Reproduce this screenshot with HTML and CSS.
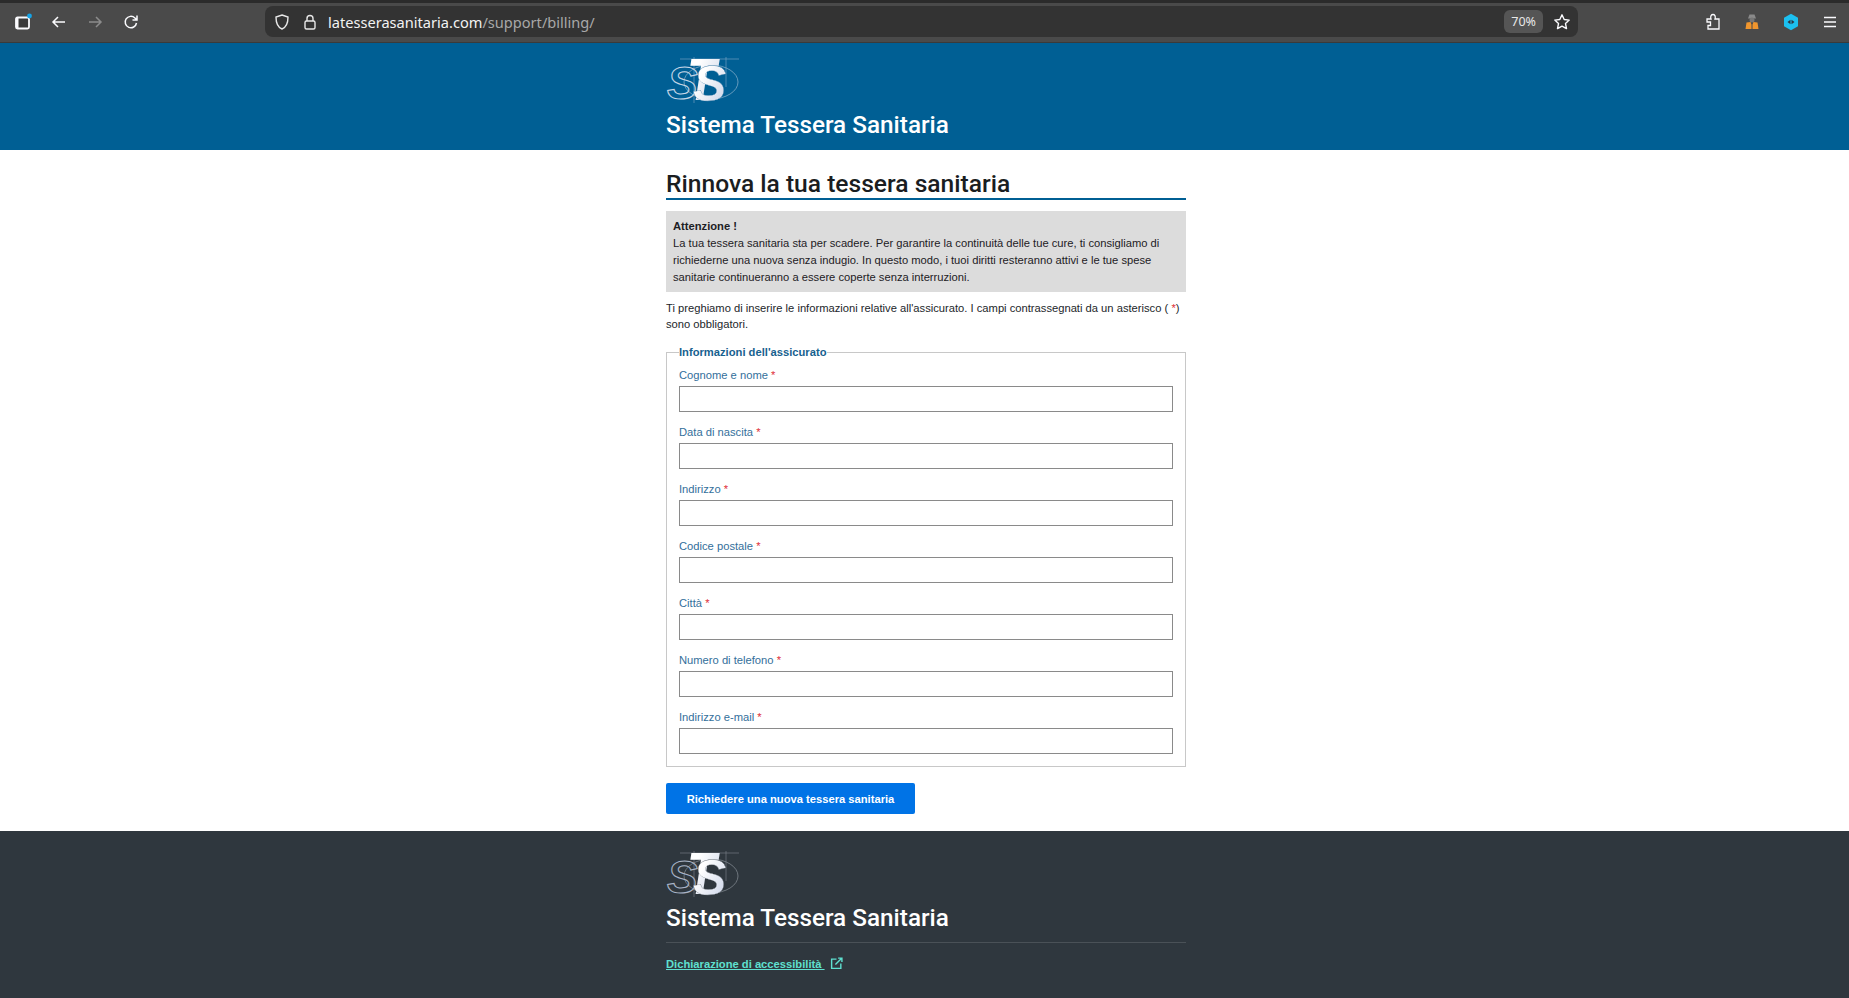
FILE: index.html
```html
<!DOCTYPE html>
<html lang="it">
<head>
    <meta charset="UTF-8">
    <title>Sistema Tessera Sanitaria</title>
    <link rel="stylesheet" href="styles.css">
</head>
<body>
    <div class="toolbar">
        <div class="nav_icons">
            <svg width="18" height="18" viewBox="0 0 18 18"><rect x="2" y="4.500" width="13" height="11" rx="1.500" fill="#3a3a3a" stroke="#fbfbfe" stroke-width="1.800"/><rect x="2" y="4.500" width="2.500" height="11" fill="#fbfbfe"/><circle cx="15.500" cy="3" r="2.400" fill="#14a4e8"/></svg>
            <svg width="18" height="18" viewBox="0 0 18 18"><path d="M15 9H3M8 4L3 9l5 5" fill="none" stroke="#fbfbfe" stroke-width="1.500"/></svg>
            <svg width="18" height="18" viewBox="0 0 18 18"><path d="M3 9h12M10 4l5 5-5 5" fill="none" stroke="#8c8c8c" stroke-width="1.500"/></svg>
            <svg width="18" height="18" viewBox="0 0 18 18"><path d="M14.500 10a5.700 5.700 0 1 1-1.600-5L15 7M15 2.500V7h-4.500" fill="none" stroke="#fbfbfe" stroke-width="1.500"/></svg>
        </div>
        <div class="urlbar">
            <svg width="18" height="18" viewBox="0 0 18 18"><path d="M9 2l6 2c0 6-1 10-6 12C4 14 3 10 3 4z" fill="none" stroke="#e8e8e8" stroke-width="1.400"/></svg>
            <svg class="lock" width="18" height="18" viewBox="0 0 18 18"><rect x="4" y="8" width="10" height="8" rx="1.500" fill="none" stroke="#e8e8e8" stroke-width="1.400"/><path d="M6 8V5.500a3 3 0 0 1 6 0V8" fill="none" stroke="#e8e8e8" stroke-width="1.400"/></svg>
            <span class="url">latesserasanitaria.com<span class="url_path">/support/billing/</span></span>
            <span class="zoom_pill">70%</span>
            <svg width="18" height="18" viewBox="0 0 18 18"><path d="M9 1.800l2.200 4.700 5 .6-3.700 3.500 1 5L9 13.100l-4.500 2.500 1-5L1.800 7.100l5-.6z" fill="none" stroke="#fbfbfe" stroke-width="1.400" stroke-linejoin="round"/></svg>
        </div>
        <div class="ext_icons">
            <svg width="18" height="18" viewBox="0 0 18 18"><path d="M3 6h4C6 3 7.500 1.500 9 1.500S12 3 11 6h4v10H4v-3.500h2.500V9H3z" fill="none" stroke="#fbfbfe" stroke-width="1.300"/></svg>
            <svg width="18" height="18" viewBox="0 0 18 18"><path d="M5 5.500l1.500-4h5l1.500 4z" fill="#8a8a8a"/><circle cx="9" cy="7" r="2.500" fill="#777"/><path d="M2.500 16l1-6.500 4-.5 1 2.500V16zM9.500 16v-4.500l1-2.500 4 .5 1 6.500z" fill="#f0962e"/></svg>
            <svg width="18" height="18" viewBox="0 0 18 18"><path d="M9 .800l7 4v8.400l-7 4-7-4V4.800z" fill="#1cc0f0"/><path d="M5.500 9l3-2.200v4.400zM12.500 9l-3-2.200v4.400z" fill="#2c3440"/></svg>
            <svg width="18" height="18" viewBox="0 0 18 18"><path d="M3 4.500h12M3 9h12M3 13.500h12" stroke="#fbfbfe" stroke-width="1.500"/></svg>
        </div>
    </div>

    <header class="site_head">
        <div class="wrap">
            <svg class="logo" width="74" height="50" viewBox="0 0 74 50">
                <defs>
                    <linearGradient id="shade" x1="0" y1="0" x2="1" y2="1">
                        <stop offset="0.300" stop-color="#ffffff"/>
                        <stop offset="1" stop-color="#c3cde4"/>
                    </linearGradient>
                </defs>
                <ellipse cx="45" cy="27" rx="27" ry="17" fill="none" stroke="#7fa9c6" stroke-width="0.800"/>
                <path d="M14 4h59M28 2v46M60 2v30" stroke="#7fa9c6" stroke-width="0.600" fill="none"/>
                <text class="logo_s1" x="1" y="44">S</text>
                <text class="logo_t" transform="translate(21 45) scale(.8 1)">T</text>
                <text class="logo_s2" x="27" y="46">S</text>
            </svg>
            <div class="brand">Sistema Tessera Sanitaria</div>
        </div>
    </header>

    <main class="wrap">
        <h1>Rinnova la tua tessera sanitaria</h1>
        <div class="alert">
            <b>Attenzione !</b><br>
            La tua tessera sanitaria sta per scadere. Per garantire la continuità delle tue cure, ti consigliamo di richiederne una nuova senza indugio. In questo modo, i tuoi diritti resteranno attivi e le tue spese sanitarie continueranno a essere coperte senza interruzioni.
        </div>
        <p class="intro">Ti preghiamo di inserire le informazioni relative all'assicurato. I campi contrassegnati da un asterisco ( <span class="req">*</span>) sono obbligatori.</p>
        <form>
            <fieldset>
                <legend>Informazioni dell'assicurato</legend>
                <div class="field"><label>Cognome e nome <span class="req">*</span></label><input type="text"></div>
                <div class="field"><label>Data di nascita <span class="req">*</span></label><input type="text"></div>
                <div class="field"><label>Indirizzo <span class="req">*</span></label><input type="text"></div>
                <div class="field"><label>Codice postale <span class="req">*</span></label><input type="text"></div>
                <div class="field"><label>Città <span class="req">*</span></label><input type="text"></div>
                <div class="field"><label>Numero di telefono <span class="req">*</span></label><input type="text"></div>
                <div class="field"><label>Indirizzo e-mail <span class="req">*</span></label><input type="text"></div>
            </fieldset>
            <button class="but_send" type="button">Richiedere una nuova tessera sanitaria</button>
        </form>
    </main>

    <footer class="site_foot">
        <div class="wrap">
            <svg class="logo" width="74" height="50" viewBox="0 0 74 50">
                <ellipse cx="45" cy="27" rx="27" ry="17" fill="none" stroke="#7d858d" stroke-width="0.800"/>
                <path d="M14 4h59M28 2v46M60 2v30" stroke="#7d858d" stroke-width="0.600" fill="none"/>
                <text class="logo_s1" x="1" y="44">S</text>
                <text class="logo_t" transform="translate(21 45) scale(.8 1)">T</text>
                <text class="logo_s2" x="27" y="46">S</text>
            </svg>
            <div class="brand">Sistema Tessera Sanitaria</div>
            <div class="foot_links">
                <a href="#">Dichiarazione di accessibilità&nbsp;</a>
                <svg width="13" height="13" viewBox="0 0 12 12"><path d="M6 2H1.500v8.500H10V6M5 7l6-6M7.500 1H11v3.500" fill="none" stroke="#5fe0d0" stroke-width="1.300"/></svg>
            </div>
        </div>
    </footer>
</body>
</html>
```

FILE: styles.css
```css
*{
    box-sizing: border-box;
}
body{
    margin: 0;
    font-family: "Liberation Sans", Arial, sans-serif;
    font-size: 11.2px;
    color: #1c2024;
    background-color: #fff;
}
.wrap{
    width: 520px;
    margin-left: 666px;
}
.toolbar{
    height: 43px;
    display: flex;
    align-items: center;
    background-color: #4a4a4a;
    border-top: 3px solid #2b2b2b;
    border-bottom: 1px solid #3a3a3a;
    padding-bottom: 2px;
}
.nav_icons{
    display: flex;
    gap: 18px;
    margin-left: 14px;
    width: 251px;
}
.urlbar{
    width: 1313px;
    height: 31px;
    display: flex;
    align-items: center;
    background-color: #333;
    border-radius: 8px;
    padding: 0 7px 0 8px;
    gap: 10px;
}
.lock{
    margin-right: -1px;
}
.url{
    flex: 1;
    font-family: "Noto Sans", sans-serif;
    font-size: 14.6px;
    color: #f2f2f2;
}
.url_path{
    color: #a8a8a8;
}
.zoom_pill{
    background-color: #555;
    color: #e8e8e8;
    font-family: "Noto Sans", sans-serif;
    font-size: 12.5px;
    padding: 3px 7px;
    border-radius: 6px;
}
.ext_icons{
    display: flex;
    gap: 20px;
    margin-left: 126px;
}
.ext_icons svg{
    margin-right: 1px;
}
.site_head{
    height: 107px;
    background-color: #005f94;
    padding-top: 12px;
}
.logo{
    display: block;
}
.logo text{
    font-family: "Liberation Sans", sans-serif;
    font-style: italic;
}
.logo_s1{
    font-size: 46px;
    font-weight: bold;
    fill: none;
    stroke: #c5d6e6;
    stroke-width: 1.100;
}
.logo_t{
    font-size: 60px;
    font-weight: bold;
    fill: url(#shade);
}
.logo_s2{
    font-size: 50px;
    font-weight: bold;
    fill: url(#shade);
    stroke: #4f86ad;
    stroke-width: 0.300;
}
.brand{
    font-family: Roboto, sans-serif;
    font-weight: 500;
    font-size: 24.3px;
    line-height: 34px;
    color: #fff;
    margin-top: 3px;
}
h1{
    font-family: Roboto, sans-serif;
    font-weight: 500;
    font-size: 24.6px;
    line-height: 38px;
    color: #1a1d21;
    margin: 15px 0 11px;
    border-bottom: 2px solid #005f94;
    height: 35px;
}
.alert{
    background-color: #dcdcdc;
    padding: 7px 7px 6px;
    line-height: 17px;
    margin-bottom: 8px;
}
.intro{
    margin: 0 0 13px;
    line-height: 16px;
    color: #22262a;
}
.req{
    color: #e0323c;
}
fieldset{
    margin: 0;
    padding: 9px 12px 12px;
    border: 1px solid #c8c8c8;
    min-width: 0;
}
legend{
    padding: 0;
    font-weight: bold;
    color: #17618f;
    line-height: 14px;
}
.field{
    margin-bottom: 13px;
}
.field:last-child{
    margin-bottom: 0;
}
label{
    display: block;
    color: #336f9b;
    line-height: 14px;
    margin-bottom: 4px;
}
input{
    display: block;
    width: 100%;
    height: 26px;
    border: 1px solid #8a8a8a;
    background-color: #fff;
}
.but_send{
    display: block;
    width: 249px;
    height: 31px;
    margin: 16px 0 17px;
    border: none;
    border-radius: 2px;
    background-color: #0073e6;
    color: #fff;
    font-family: "Liberation Sans", Arial, sans-serif;
    font-weight: bold;
    font-size: 11.2px;
}
.site_foot{
    height: 167px;
    background-color: #2f373e;
    padding-top: 18px;
}
.site_foot .logo_s1{
    stroke: #a9b4c6;
}
.site_foot .logo_s2{
    stroke: #6d757d;
}
.site_foot .brand{
    margin-top: 2px;
    padding-bottom: 8px;
    border-bottom: 1px solid #4a5157;
    height: 42px;
}
.foot_links{
    display: flex;
    align-items: center;
    gap: 5px;
    margin-top: 14px;
}
.foot_links a{
    color: #5fe0d0;
    font-weight: bold;
}
```
